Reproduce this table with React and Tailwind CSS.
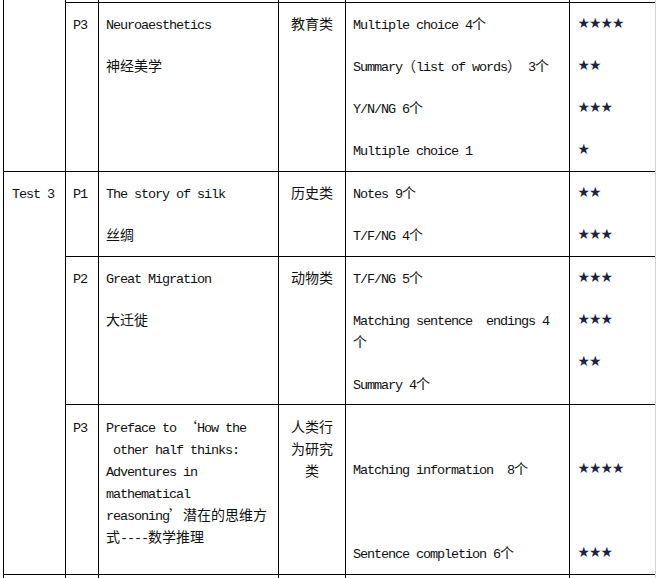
import React from 'react';

// split a string into latin (mono) and CJK runs, SimSun-like sizing
const Txt = ({ s }) => {
  const parts = s.split(/([\u3000-\u9fff\uff00-\uffef\u2018\u2019]+)/);
  return parts.map((p, i) =>
    i % 2 ? (
      <span key={i} className="font-['Noto_Sans_CJK_SC',sans-serif] text-[14px] leading-[0] tracking-normal">
        {p}
      </span>
    ) : (
      p
    )
  );
};

const Para = ({ lines = [] }) => (
  <div className="mb-[20px] last:mb-0">
    {lines.map((l, i) => (
      <div key={i} className="h-[22px] leading-[22px] whitespace-pre">
        <Txt s={l} />
      </div>
    ))}
  </div>
);

const Stars = ({ n }) => (
  <div className="h-[22px] leading-[22px] mb-[20px] last:mb-0 font-['Noto_Sans_CJK_SC',sans-serif] text-[11.5px] tracking-normal text-[#1b2440]">
    {'★'.repeat(n)}
  </div>
);

const Cell = ({ className = '', children }) => (
  <div className={`bg-white pl-[7px] pr-[5px] pt-[12px] overflow-hidden ${className}`}>{children}</div>
);

export default function App() {
  return (
    <div className="w-[660px] h-[578px] bg-white overflow-hidden text-[#111] font-['Liberation_Mono','Noto_Sans_CJK_SC',monospace] text-[13.5px] tracking-[-1.1px]">
      <div className="ml-[3px] w-[653px] h-[578px] bg-black pl-px border-r border-[#d4d4d4] grid gap-px grid-cols-[61px_32px_179px_66px_223px_85px] grid-rows-[2px_168px_84px_147px_169px_3px]">
        {/* top strip: continuation of previous rows */}
        <div className="bg-white row-span-2" />
        <div className="bg-white" />
        <div className="bg-white" />
        <div className="bg-white" />
        <div className="bg-white" />
        <div className="bg-white" />

        {/* row: P3 Neuroaesthetics */}
        <Cell><Para lines={['P3']} /></Cell>
        <Cell>
          <Para lines={['Neuroaesthetics']} />
          <Para lines={['神经美学']} />
        </Cell>
        <Cell className="text-center !pl-0 !pr-0"><Para lines={['教育类']} /></Cell>
        <Cell>
          <Para lines={['Multiple choice 4个']} />
          <Para lines={['Summary（list of words） 3个']} />
          <Para lines={['Y/N/NG 6个']} />
          <Para lines={['Multiple choice 1']} />
        </Cell>
        <Cell className="!pl-[8px] !pt-[8px]">
          <Stars n={4} />
          <Stars n={2} />
          <Stars n={3} />
          <Stars n={1} />
        </Cell>

        {/* Test 3 */}
        <Cell className="row-span-3 !pl-[8px]"><Para lines={['Test 3']} /></Cell>

        {/* P1 */}
        <Cell><Para lines={['P1']} /></Cell>
        <Cell>
          <Para lines={['The story of silk']} />
          <Para lines={['丝绸']} />
        </Cell>
        <Cell className="text-center !pl-0 !pr-0"><Para lines={['历史类']} /></Cell>
        <Cell>
          <Para lines={['Notes 9个']} />
          <Para lines={['T/F/NG 4个']} />
        </Cell>
        <Cell className="!pl-[8px] !pt-[8px]">
          <Stars n={2} />
          <Stars n={3} />
        </Cell>

        {/* P2 */}
        <Cell><Para lines={['P2']} /></Cell>
        <Cell>
          <Para lines={['Great Migration']} />
          <Para lines={['大迁徙']} />
        </Cell>
        <Cell className="text-center !pl-0 !pr-0"><Para lines={['动物类']} /></Cell>
        <Cell>
          <Para lines={['T/F/NG 5个']} />
          <Para lines={['Matching sentence  endings 4', '个']} />
          <Para lines={['Summary 4个']} />
        </Cell>
        <Cell className="!pl-[8px] !pt-[8px]">
          <Stars n={3} />
          <Stars n={3} />
          <Stars n={2} />
        </Cell>

        {/* P3 */}
        <Cell className="!pt-[13px]"><Para lines={['P3']} /></Cell>
        <Cell className="!pt-[13px]">
          <Para
            lines={[
              'Preface to ‘How the',
              ' other half thinks:',
              'Adventures in',
              'mathematical',
              'reasoning’潜在的思维方',
              '式----数学推理',
            ]}
          />
        </Cell>
        <Cell className="text-center !pl-0 !pr-0 !pt-[13px]"><Para lines={['人类行', '为研究', '类']} /></Cell>
        <Cell className="!pt-[13px]">
          <Para lines={['']} />
          <Para lines={['Matching information  8个']} />
          <Para lines={['']} />
          <Para lines={['Sentence completion 6个']} />
        </Cell>
        <Cell className="!pl-[8px] !pt-[9px]">
          <div className="h-[22px] mb-[20px]" />
          <Stars n={4} />
          <div className="h-[22px] mb-[20px]" />
          <Stars n={3} />
        </Cell>

        {/* bottom strip: start of next row */}
        <div className="bg-white" />
        <div className="bg-white" />
        <div className="bg-white" />
        <div className="bg-white" />
        <div className="bg-white" />
        <div className="bg-white" />
      </div>
    </div>
  );
}
